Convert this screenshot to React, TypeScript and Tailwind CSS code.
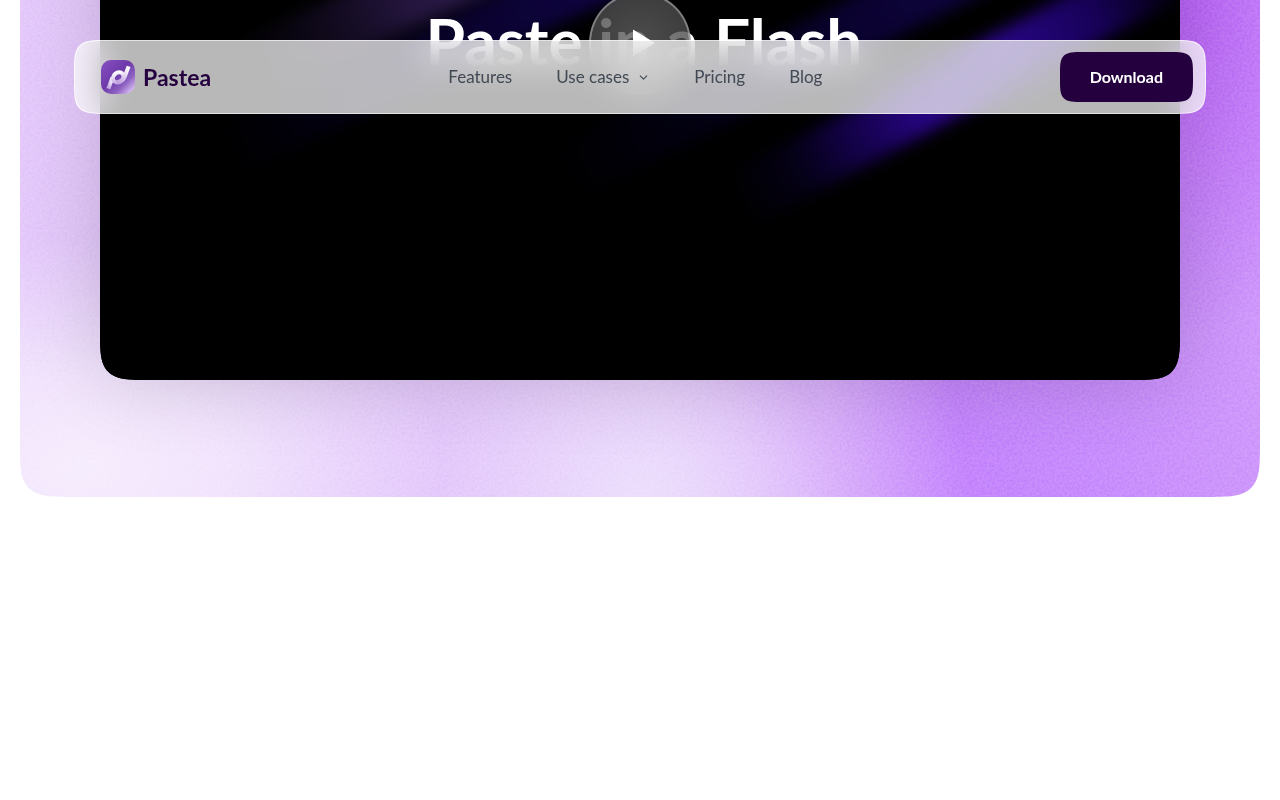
import { ChevronDown } from "lucide-react";

const links = [
  { label: "Features", href: "#features" },
  { label: "Use cases", href: "#use-cases", menu: true },
  { label: "Pricing", href: "#pricing" },
  { label: "Blog", href: "#blog" },
];

const Logo = () => {
  return (
    <a href="#" className="flex items-center gap-2">
      <svg viewBox="0 0 34 34" className="size-[34px]" aria-hidden="true">
        <defs>
          <linearGradient id="tile" x1="0" y1="0" x2="1" y2="1">
            <stop offset="0" stopColor="#8a4fc4" />
            <stop offset="0.45" stopColor="#6d3aa8" />
            <stop offset="0.7" stopColor="#8d62c2" />
            <stop offset="0.9" stopColor="#d3b6ee" />
            <stop offset="1" stopColor="#b58ae0" />
          </linearGradient>
          <linearGradient id="mark" x1="0.8" y1="0" x2="0.2" y2="1">
            <stop offset="0" stopColor="#fff" />
            <stop offset="1" stopColor="#c3a4e2" />
          </linearGradient>
        </defs>
        <rect width="34" height="34" rx="10" fill="url(#tile)" />
        <g fill="none" stroke="url(#mark)" strokeWidth="4">
          <path d="M7.4 28.6 L11.4 17.6" />
          <ellipse cx="17.2" cy="17.4" rx="5.6" ry="4.6" transform="rotate(-40 17.2 17.4)" />
          <path d="M27.6 6.4 L24 16 C22.6 20 19.6 22.2 15.4 22.2" />
        </g>
      </svg>
      <span className="text-[23px] leading-8 font-bold text-[#25023f]">
        Pastea
      </span>
    </a>
  );
};

const Header = () => {
  return (
    <header className="fixed inset-x-0 top-10 z-20 px-6">
      <div className="relative mx-auto flex h-[74px] max-w-[1132px] items-center justify-between overflow-hidden rounded-[34px] border border-white/60 bg-white/72 pr-3 pl-[26px] [corner-shape:squircle]">
        <div className="absolute inset-0 -z-10 backdrop-blur-lg [mask-image:linear-gradient(to_bottom,transparent,black_65%)]" />
        <Logo />
        <nav className="flex items-center gap-11">
          {links.map((link) => (
            <a
              key={link.label}
              href={link.href}
              className="flex items-center gap-2 text-[17px] leading-6 text-[#414954]"
            >
              {link.label}
              {link.menu && <ChevronDown size={13} strokeWidth={2} />}
            </a>
          ))}
        </nav>
        <button
          type="button"
          className="h-[50px] rounded-3xl bg-[#25003f] px-[30px] text-base font-bold text-white [corner-shape:squircle]"
        >
          Download
        </button>
      </div>
    </header>
  );
};

// Diagonal light streaks behind the video title
const Poster = () => {
  return (
    <svg
      viewBox="0 0 1080 675"
      preserveAspectRatio="xMidYMid slice"
      className="absolute inset-0 size-full"
      aria-hidden="true"
    >
      <defs>
        <linearGradient id="beam" x1="1" x2="0">
          <stop offset="0" stopColor="#1d0170" stopOpacity="0" />
          <stop offset="0.2" stopColor="#1d0170" stopOpacity="0.8" />
          <stop offset="0.4" stopColor="#290687" />
          <stop offset="0.6" stopColor="#260480" />
          <stop offset="0.75" stopColor="#1a0262" stopOpacity="0.7" />
          <stop offset="0.87" stopColor="#120252" stopOpacity="0.25" />
          <stop offset="1" stopColor="#120252" stopOpacity="0" />
        </linearGradient>
        <linearGradient id="haze" x1="1" x2="0">
          <stop offset="0" stopColor="#3c2468" />
          <stop offset="0.45" stopColor="#2c1a4c" stopOpacity="0.8" />
          <stop offset="1" stopColor="#1c1030" stopOpacity="0" />
        </linearGradient>
        <linearGradient id="dim" x1="1" x2="0">
          <stop offset="0" stopColor="#12044e" />
          <stop offset="0.4" stopColor="#0e0340" stopOpacity="0.75" />
          <stop offset="0.75" stopColor="#0a0240" stopOpacity="0.25" />
          <stop offset="1" stopColor="#0a0240" stopOpacity="0" />
        </linearGradient>
        <filter id="soft" x="-20%" y="-60%" width="140%" height="220%" colorInterpolationFilters="sRGB">
          <feGaussianBlur stdDeviation="8" />
        </filter>
      </defs>
      <rect width="1080" height="675" fill="#000" />
      <g filter="url(#soft)">
        <rect x="-240" y="-28" width="500" height="56" fill="url(#beam)" transform="translate(850 384) rotate(-28)" />
        <rect x="-270" y="-28" width="560" height="56" fill="url(#dim)" transform="translate(700 350) rotate(-27)" />
        <rect x="-170" y="-30" width="340" height="60" fill="url(#haze)" transform="translate(290 300) rotate(-25)" />
        <rect x="-240" y="-26" width="480" height="52" fill="url(#dim)" transform="translate(340 346) rotate(-25)" />
      </g>
    </svg>
  );
};

const Video = () => {
  return (
    <div className="relative mx-20 grid aspect-[16/10] shrink-0 place-items-center rounded-[52px] shadow-[0_0_80px_rgba(0,0,0,0.16)] [corner-shape:squircle]">
      <div className="absolute inset-0 overflow-hidden rounded-[52px] bg-black [corner-shape:squircle]">
        <Poster />
      </div>
      <h2 className="relative col-start-1 row-start-1 pb-1 pl-2 text-[64px] leading-none font-bold whitespace-nowrap text-white">
        Paste in a Flash
      </h2>
      <button
        type="button"
        aria-label="Play video"
        className="relative col-start-1 row-start-1 grid size-[102px] place-items-center rounded-full border-2 border-white/35 bg-radial from-[#606060]/80 to-[#454545]/80"
      >
        <svg viewBox="0 0 24 28" className="h-7 w-6 translate-x-1" aria-hidden="true">
          <path d="M1 0.5 L23 14 L1 27.5 Z" fill="#fff" />
        </svg>
      </button>
    </div>
  );
};

const Grain = () => {
  return (
    <svg className="absolute inset-0 size-full opacity-15 mix-blend-soft-light" aria-hidden="true">
      <filter id="grain" colorInterpolationFilters="sRGB">
        <feTurbulence type="fractalNoise" baseFrequency="0.4" numOctaves="3" />
        <feColorMatrix
          type="matrix"
          values="2 0 0 0 -0.5  2 0 0 0 -0.5  2 0 0 0 -0.5  0 0 0 0 1"
        />
      </filter>
      <rect width="100%" height="100%" filter="url(#grain)" />
    </svg>
  );
};

const Hero = () => {
  return (
    <section className="relative mx-5 flex h-[497px] flex-col justify-end overflow-hidden rounded-b-[56px] bg-[#e4c9fb] bg-[radial-gradient(ellipse_360px_230px_at_5%_94%,#f6edfd_0%,#f5ebfdcc_40%,#f4eafd00_100%),radial-gradient(ellipse_200px_180px_at_50%_100%,#eddffc_0%,#eddffc00_100%),radial-gradient(ellipse_200px_340px_at_93%_0%,#b862f5_0%,#b862f500_100%),linear-gradient(83deg,#d9b0fa00_50%,#d9b0fa_63%,#c586fc_73%,#c98ffc_85%,#cf99fb_96%)] pb-[117px] [corner-shape:squircle]">
      <Grain />
      <Video />
    </section>
  );
};

const App = () => {
  return (
    <div className="min-h-screen bg-white font-['Lato',sans-serif]">
      <Header />
      <main>
        <Hero />
      </main>
    </div>
  );
};

export default App;
